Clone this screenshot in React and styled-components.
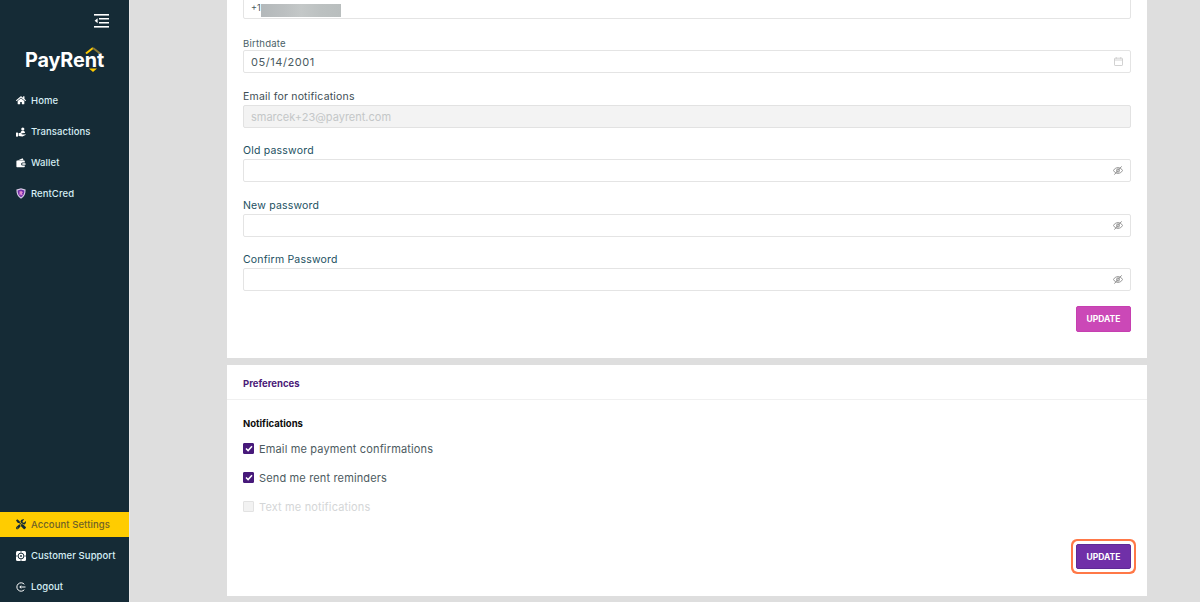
import React from 'react';
import styled, { createGlobalStyle } from 'styled-components';
import { FaHome, FaTools } from 'react-icons/fa';

const GlobalStyle = createGlobalStyle`
  html, body { margin: 0; padding: 0; height: 100%; }
  body { font-family: Inter, "Open Sans", "Liberation Sans", sans-serif; background: #dedede; }
  #root { height: 100%; }
`;

const Page = styled.div`
  display: flex;
  height: 602px;
  overflow: hidden;
  background: #dedede;
`;

const Sidebar = styled.aside`
  flex: 0 0 129px;
  display: flex;
  flex-direction: column;
  background: #152b36;
  border-right: 1px solid #e8e8e8;
  box-sizing: content-box;
`;

const ToggleRow = styled.div`
  display: flex;
  justify-content: flex-end;
  padding: 14px 20px 0 0;
  height: 14px;
`;

const Logo = styled.div`
  position: relative;
  align-self: flex-start;
  margin: 19px 0 0 25px;
  height: 27px;
  font-size: 19.8px;
  line-height: 27px;
  font-weight: 700;
  letter-spacing: -0.1px;
  color: #fff;
  font-family: Inter, sans-serif;
`;

const LogoMark = styled.svg`
  position: absolute;
  left: 60px;
  top: 0;
`;

const Nav = styled.nav`
  display: flex;
  flex-direction: column;
  margin-top: 11px;
`;

const BottomNav = styled(Nav)`
  margin-top: auto;
`;

const NavItem = styled.a`
  display: flex;
  align-items: center;
  gap: 5px;
  height: ${p => (p.$active ? 25 : 31)}px;
  padding-left: 16px;
  margin-bottom: ${p => (p.$active ? 3 : 0)}px;
  margin-top: ${p => (p.$active ? 3 : 0)}px;
  font-size: 9.5px;
  font-weight: 500;
  letter-spacing: 0.08px;
  color: ${p => (p.$active ? '#6f6226' : '#d6eef4')};
  background: ${p => (p.$active ? '#ffcc00' : 'transparent')};
`;

const IconSlot = styled.span`
  flex: none;
  display: flex;
  align-items: center;
  justify-content: center;
  width: 10px;
  height: 11px;
  color: ${p => (p.$dark ? '#152b36' : '#fff')};
  font-size: 10.5px;
`;

const Main = styled.main`
  flex: 1;
  display: flex;
  flex-direction: column;
  justify-content: flex-end;
  gap: 7px;
  padding: 0 53px 6px 97px;
  overflow: hidden;
`;

const Card = styled.section`
  flex: none;
  background: #fff;
`;

const FormBody = styled.div`
  display: flex;
  flex-direction: column;
  padding: 0 16px 26px;
`;

const Field = styled.div`
  display: flex;
  flex-direction: column;
  margin-bottom: ${p => p.$gap}px;
`;

const Label = styled.label`
  font-size: ${p => (p.$small ? 9.6 : 10.5)}px;
  line-height: 13px;
  height: 13px;
  margin-bottom: ${p => (p.$small ? 0 : 2)}px;
  letter-spacing: 0.2px;
  color: ${p => p.$color || '#22505f'};
`;

const InputBox = styled.div`
  display: flex;
  align-items: center;
  justify-content: space-between;
  height: 23px;
  box-sizing: border-box;
  padding: 0 7px;
  border: 1px solid ${p => (p.$disabled ? '#e2e2e2' : '#e4e4e4')};
  border-radius: 2px;
  background: ${p => (p.$disabled ? '#f3f3f3' : '#fff')};
  font-size: ${p => p.$size || 11}px;
  letter-spacing: ${p => (p.$disabled ? 0 : 0.55)}px;
  color: ${p => (p.$disabled ? '#c4c7c8' : '#4a5a60')};
`;

const Phone = styled.span`
  display: flex;
  align-items: center;
  font-size: 9px;
  letter-spacing: 0;
`;

const Blur = styled.span`
  display: block;
  width: 80px;
  height: 13px;
  margin-top: 6px;
  background: linear-gradient(90deg, #b3b8ba 0%, #bcc0c1 30%, #c4c8c8 50%, #bcc1c1 75%, #b9bebe 100%);
`;

const Actions = styled.div`
  display: flex;
  justify-content: flex-end;
`;

const UpdateButton = styled.button`
  width: 55px;
  height: ${p => (p.$focus ? 25 : 26)}px;
  padding: 0;
  border: 1px solid ${p => (p.$focus ? '#5e2a96' : '#c63fb0')};
  border-radius: 2px;
  background: ${p => (p.$focus ? '#7030a8' : '#cb48b7')};
  color: #fff;
  font-family: inherit;
  font-size: 8.5px;
  font-weight: 700;
  box-shadow: ${p => (p.$focus ? '0 0 0 3px #fff, 0 0 0 5px #ff7847' : 'none')};
`;

const CardHeader = styled.header`
  height: 35px;
  display: flex;
  align-items: center;
  padding: 2px 16px 0;
  box-sizing: border-box;
  border-bottom: 1px solid #f0f0f0;
  font-size: 9.5px;
  font-weight: 700;
  color: #4b1a78;
`;

const PrefBody = styled.div`
  display: flex;
  flex-direction: column;
  padding: 17px 16px 27px;
`;

const SubTitle = styled.h4`
  margin: 0 0 4px;
  font-size: 9.5px;
  line-height: 13px;
  font-weight: 700;
  color: #0c0c0c;
`;

const CheckRow = styled.div`
  display: flex;
  align-items: center;
  gap: 5px;
  height: 29px;
  font-size: 11px;
  letter-spacing: 0.15px;
  color: ${p => (p.$disabled ? '#d4d6d7' : '#4d5b61')};
`;

const Box = styled.span`
  display: flex;
  align-items: center;
  justify-content: center;
  box-sizing: border-box;
  width: 11px;
  height: 11px;
  border-radius: 1px;
  border: 1px solid ${p => (p.$checked ? '#47197a' : '#e2e2e2')};
  background: ${p => (p.$checked ? '#47197a' : '#f2f2f2')};
`;

const PrefActions = styled(Actions)`
  margin-top: 23px;
`;

const MenuIcon = () => (
  <svg width="15" height="14" viewBox="0 0 15 14" fill="#fff">
    <rect x="0" y="0" width="15" height="1.6" />
    <rect x="5" y="4" width="10" height="1.5" />
    <rect x="5" y="8" width="10" height="1.5" />
    <rect x="0" y="12" width="15" height="1.6" />
    <path d="M3.6 4.2v5L.6 6.7z" />
  </svg>
);

const HandIcon = () => (
  <svg width="10" height="10" viewBox="0 0 10 10" fill="#fff">
    <circle cx="6.8" cy="2" r="1.6" />
    <path d="M4.6 6c0-1.6 1-2.2 2.2-2.2S9 4.4 9 6z" />
    <rect x="0" y="5.6" width="2" height="4" />
    <path d="M2.6 6h2.2l1.4.7h1.3v.9H5.4l1 .3 2.8-.7.7.5-3.4 1.8-3.9-.4z" />
  </svg>
);

const WalletIcon = () => (
  <svg width="10" height="10" viewBox="0 0 10 10" fill="#fff">
    <path d="M1.6 2.6 6.6.3l1 1.9z" />
    <path d="M.4 3.2c0-.4.3-.6.6-.6h7.2c.3 0 .6.2.6.6v1.2H6.6a1.5 1.5 0 0 0 0 3h2.2v1.2c0 .4-.3.6-.6.6H1c-.3 0-.6-.2-.6-.6z" />
    <rect x="6.2" y="5.2" width="3.4" height="1.5" rx=".5" />
  </svg>
);

const ShieldIcon = () => (
  <svg width="10" height="11" viewBox="0 0 10 11">
    <path d="M5 .2 9.6 1.6c.2 4-1.2 7.4-4.6 9.2C1.600 9 .2 5.600.4 1.600z" fill="#d9cbe6" />
    <path d="M5 1.500 8.400 2.500c0 3-1 5.300-3.400 6.800C2.600 7.800 1.600 5.500 1.600 2.500z" fill="#6f2da8" />
    <path d="M3.500 3.200h2.400l1 1.200-1 1.100 1 1.700H5.400L4.600 5.700v1.500H3.500z" fill="#e58ad0" />
  </svg>
);

const LifeRing = () => (
  <svg width="10" height="10" viewBox="0 0 10 10">
    <rect width="10" height="10" rx="1.500" fill="#fff" />
    <circle cx="5" cy="5" r="2.900" fill="none" stroke="#152b36" strokeWidth="1" />
    <circle cx="5" cy="5" r=".9" fill="#152b36" />
    <path d="M5 0v1.600M5 10V8.400M0 5h1.600M10 5H8.400" stroke="#152b36" strokeWidth=".7" />
  </svg>
);

const LogoutIcon = () => (
  <svg width="10" height="10" viewBox="0 0 10 10" fill="none" stroke="#fff" strokeWidth="1">
    <path d="M8.300 2.300A4.200 4.200 0 1 0 8.300 7.700" />
    <path d="M3.800 5h5.700" />
    <path d="M5.300 3.600 3.800 5l1.500 1.400" />
  </svg>
);

const CalendarIcon = () => (
  <svg width="9" height="9" viewBox="0 0 9 9" fill="none" stroke="#c6c6c6" strokeWidth=".8">
    <rect x=".5" y="1.200" width="8" height="7.300" rx=".6" />
    <path d="M.5 3h8M2.300.2v1.500M6.700.2v1.500" />
  </svg>
);

const EyeOffIcon = () => (
  <svg width="10" height="9" viewBox="0 0 10 9" fill="none" stroke="#8f8f8f" strokeWidth="1">
    <path d="M.4 4.500C1.500 2.700 3 1.700 5 1.700s3.500 1 4.600 2.800C8.500 6.300 7 7.300 5 7.300S1.500 6.300.4 4.500z" />
    <circle cx="5" cy="4.500" r="1.500" />
    <path d="M8.600.4 1.400 8.600" />
  </svg>
);

const CheckMark = () => (
  <svg width="8" height="7" viewBox="0 0 8 7" fill="none" stroke="#fff" strokeWidth="1.500">
    <path d="M1 3.500 3.100 5.600 7 1.200" />
  </svg>
);

const topLinks = [
  { label: 'Home', icon: <FaHome /> },
  { label: 'Transactions', icon: <HandIcon /> },
  { label: 'Wallet', icon: <WalletIcon /> },
  { label: 'RentCred', icon: <ShieldIcon /> },
];

const bottomLinks = [
  { label: 'Account Settings', icon: <FaTools />, active: true },
  { label: 'Customer Support', icon: <LifeRing /> },
  { label: 'Logout', icon: <LogoutIcon /> },
];

const passwordFields = [
  { label: 'Old password', gap: 17 },
  { label: 'New password', gap: 16 },
  { label: 'Confirm Password', gap: 15 },
];

const prefs = [
  { label: 'Email me payment confirmations', checked: true },
  { label: 'Send me rent reminders', checked: true },
  { label: 'Text me notifications', disabled: true },
];

const NavLink = ({ item }) => (
  <NavItem $active={item.active}>
    <IconSlot $dark={item.active}>{item.icon}</IconSlot>
    {item.label}
  </NavItem>
);

export default function App() {
  return (
    <Page>
      <GlobalStyle />
      <Sidebar>
        <ToggleRow><MenuIcon /></ToggleRow>
        <Logo>
          PayRent
          <LogoMark width="16" height="26" viewBox="0 0 16 26" fill="none" strokeWidth="2">
            <path d="M1 6.500 8 1" stroke="#ffcc00" />
            <path d="M8 1l7 5.500" stroke="#8a7a3a" />
            <path d="M4 21.500h8L8 25z" fill="#ffcc00" />
          </LogoMark>
        </Logo>
        <Nav>
          {topLinks.map(item => <NavLink key={item.label} item={item} />)}
        </Nav>
        <BottomNav>
          {bottomLinks.map(item => <NavLink key={item.label} item={item} />)}
        </BottomNav>
      </Sidebar>
      <Main>
        <Card>
          <FormBody>
            <Field $gap={18}>
              <InputBox $size={9}>
                <Phone>+1<Blur /></Phone>
              </InputBox>
            </Field>
            <Field $gap={17}>
              <Label $small $color="#4a5f68">Birthdate</Label>
              <InputBox>05/14/2001<CalendarIcon /></InputBox>
            </Field>
            <Field $gap={16}>
              <Label $color="#3e4d54">Email for notifications</Label>
              <InputBox $disabled>smarcek+23@payrent.com</InputBox>
            </Field>
            {passwordFields.map(f => (
              <Field key={f.label} $gap={f.gap}>
                <Label>{f.label}</Label>
                <InputBox><span /><EyeOffIcon /></InputBox>
              </Field>
            ))}
            <Actions><UpdateButton>UPDATE</UpdateButton></Actions>
          </FormBody>
        </Card>
        <Card>
          <CardHeader>Preferences</CardHeader>
          <PrefBody>
            <SubTitle>Notifications</SubTitle>
            {prefs.map(p => (
              <CheckRow key={p.label} $disabled={p.disabled}>
                <Box $checked={p.checked}>{p.checked && <CheckMark />}</Box>
                {p.label}
              </CheckRow>
            ))}
            <PrefActions><UpdateButton $focus>UPDATE</UpdateButton></PrefActions>
          </PrefBody>
        </Card>
      </Main>
    </Page>
  );
}
